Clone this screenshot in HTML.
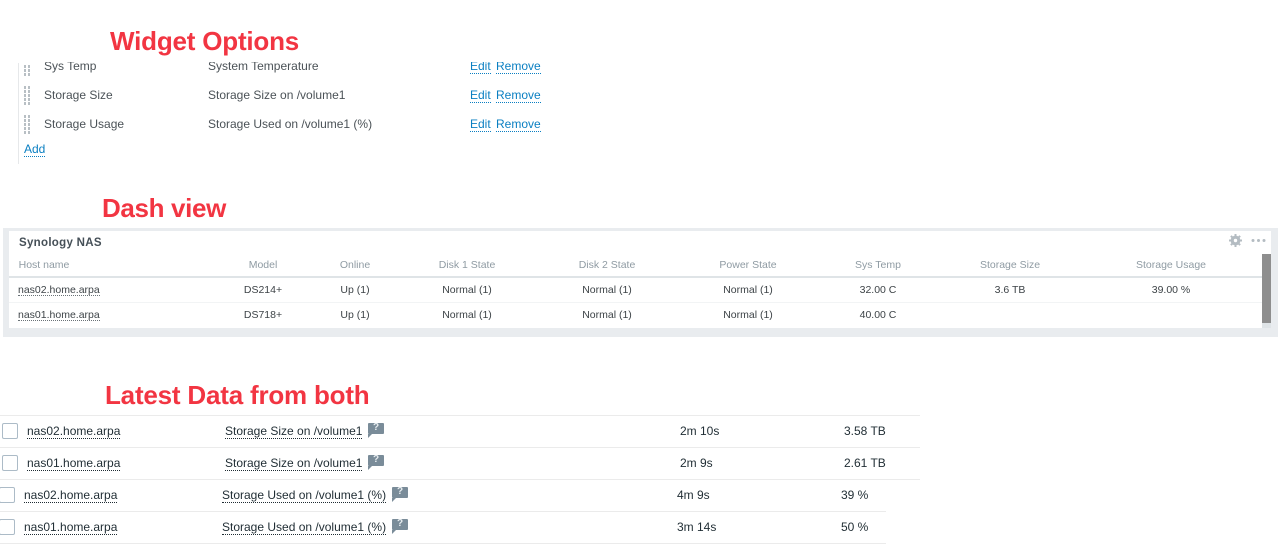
<!DOCTYPE html>
<html><head><meta charset="utf-8">
<style>
html,body{margin:0;padding:0;background:#fff;width:1278px;height:558px;overflow:hidden}
body{position:relative;font-family:"Liberation Sans",sans-serif}
div,span{position:absolute;white-space:nowrap}
.h{font-weight:bold;color:#f23542;font-size:26px;line-height:30px;font-family:"Liberation Sans",sans-serif}
.w{font-size:12px;line-height:16px;color:#4b5257;filter:blur(.3px)}
.l{font-size:12px;line-height:14px;color:#0a7fc2;border-bottom:1px dotted #0a7fc2;filter:blur(.3px)}
svg{position:absolute}
.th{font-size:10.5px;line-height:14px;color:#8f9ba3;transform:translateX(-50%);filter:blur(.35px)}
.td{font-size:10.5px;line-height:14px;color:#3d4347;transform:translateX(-50%);filter:blur(.35px)}
.ln{font-size:10.5px;line-height:12px;height:11px;color:#3d4347;left:18px;border-bottom:1px dotted #6a7277;filter:blur(.3px)}
.r{height:1px;background:#ebebeb;left:0}
.c{width:14px;height:14px;border:1px solid #acbbc7;border-radius:2px;background:#fff}
.t{font-size:12px;line-height:15px;height:14px;color:#1f2c33}
.d{border-bottom:1px dotted #1f2c33}
.q{width:16px;height:11px;background:#7a8c99;border-radius:1px;color:#e8edf0;font-size:10px;font-weight:bold;line-height:10px;text-align:center}
.q:after{content:"";position:absolute;left:0;top:11px;border-top:4px solid #7a8c99;border-right:4px solid transparent}
</style></head><body>

<div class="h" style="left:110px;top:26px;letter-spacing:-0.2px">Widget Options</div>
<div style="left:18px;top:63px;width:1px;height:101px;background:#e6e8ea"></div>

<svg style="left:24px;top:65px" width="6" height="11" fill="#b8bfc4"><rect x="0" y="0" width="2" height="3"/><rect x="4" y="0" width="2" height="3"/><rect x="0" y="4" width="2" height="3"/><rect x="4" y="4" width="2" height="3"/><rect x="0" y="8" width="2" height="3"/><rect x="4" y="8" width="2" height="3"/></svg>
<svg style="left:24px;top:86px" width="6" height="19" fill="#b8bfc4"><rect x="0" y="0" width="2" height="3"/><rect x="4" y="0" width="2" height="3"/><rect x="0" y="4" width="2" height="3"/><rect x="4" y="4" width="2" height="3"/><rect x="0" y="8" width="2" height="3"/><rect x="4" y="8" width="2" height="3"/><rect x="0" y="12" width="2" height="3"/><rect x="4" y="12" width="2" height="3"/><rect x="0" y="16" width="2" height="3"/><rect x="4" y="16" width="2" height="3"/></svg>
<svg style="left:24px;top:115px" width="6" height="19" fill="#b8bfc4"><rect x="0" y="0" width="2" height="3"/><rect x="4" y="0" width="2" height="3"/><rect x="0" y="4" width="2" height="3"/><rect x="4" y="4" width="2" height="3"/><rect x="0" y="8" width="2" height="3"/><rect x="4" y="8" width="2" height="3"/><rect x="0" y="12" width="2" height="3"/><rect x="4" y="12" width="2" height="3"/><rect x="0" y="16" width="2" height="3"/><rect x="4" y="16" width="2" height="3"/></svg>

<div style="left:30px;top:62px;width:570px;height:20px;overflow:hidden">
<div class="w" style="left:14px;top:-4px">Sys Temp</div>
<div class="w" style="left:178px;top:-4px">System Temperature</div>
<div class="l" style="left:440px;top:-3px">Edit</div>
<div class="l" style="left:466px;top:-3px">Remove</div>
</div>
<div class="w" style="left:44px;top:87px">Storage Size</div>
<div class="w" style="left:208px;top:87px">Storage Size on /volume1</div>
<div class="l" style="left:470px;top:88px">Edit</div>
<div class="l" style="left:496px;top:88px">Remove</div>
<div class="w" style="left:44px;top:116px">Storage Usage</div>
<div class="w" style="left:208px;top:116px">Storage Used on /volume1 (%)</div>
<div class="l" style="left:470px;top:117px">Edit</div>
<div class="l" style="left:496px;top:117px">Remove</div>
<div class="l" style="left:24px;top:142px">Add</div>

<div class="h" style="left:102px;top:193px;letter-spacing:-0.35px">Dash view</div>
<div style="left:3px;top:228px;width:1275px;height:109px;background:#e9ecef"></div>
<div style="left:9px;top:231px;width:1262px;height:97px;background:#fff"></div>
<div style="left:9px;top:276px;width:1253px;height:2px;background:#dfe4e7"></div>
<div style="left:9px;top:302px;width:1253px;height:1px;background:#f2f4f5"></div>
<div style="left:1262px;top:254px;width:9px;height:69px;background:#8e8e8e"></div>
<div style="left:1262px;top:323px;width:9px;height:5px;background:#dfe4e7"></div>
<div style="left:19px;top:236px;font-size:11.5px;font-weight:bold;line-height:14px;color:#454f57;letter-spacing:.3px;filter:blur(.3px)">Synology NAS</div>
<svg style="left:1229px;top:234px" width="13" height="13" viewBox="0 0 13 13"><circle cx="6.5" cy="6.5" r="3.6" fill="none" stroke="#b4bcc2" stroke-width="2.6"/><path d="M6.5 0v13M0 6.5h13M1.9 1.9l9.2 9.2M11.1 1.9l-9.2 9.2" stroke="#b4bcc2" stroke-width="2"/><circle cx="6.5" cy="6.5" r="1.7" fill="#fff"/></svg>
<svg style="left:1251px;top:238px" width="15" height="5" viewBox="0 0 15 5"><circle cx="2" cy="2.5" r="1.5" fill="#b4bcc2"/><circle cx="7.5" cy="2.5" r="1.5" fill="#b4bcc2"/><circle cx="13" cy="2.5" r="1.5" fill="#b4bcc2"/></svg>

<div class="th" style="left:44px;top:258px">Host name</div>
<div class="th" style="left:263px;top:258px">Model</div>
<div class="th" style="left:355px;top:258px">Online</div>
<div class="th" style="left:467px;top:258px">Disk 1 State</div>
<div class="th" style="left:607px;top:258px">Disk 2 State</div>
<div class="th" style="left:748px;top:258px">Power State</div>
<div class="th" style="left:878px;top:258px">Sys Temp</div>
<div class="th" style="left:1010px;top:258px">Storage Size</div>
<div class="th" style="left:1171px;top:258px">Storage Usage</div>

<div class="ln" style="top:284px">nas02.home.arpa</div>
<div class="td" style="left:263px;top:283px">DS214+</div>
<div class="td" style="left:355px;top:283px">Up (1)</div>
<div class="td" style="left:467px;top:283px">Normal (1)</div>
<div class="td" style="left:607px;top:283px">Normal (1)</div>
<div class="td" style="left:748px;top:283px">Normal (1)</div>
<div class="td" style="left:878px;top:283px">32.00 C</div>
<div class="td" style="left:1010px;top:283px">3.6 TB</div>
<div class="td" style="left:1171px;top:283px">39.00 %</div>

<div class="ln" style="top:309px">nas01.home.arpa</div>
<div class="td" style="left:263px;top:308px">DS718+</div>
<div class="td" style="left:355px;top:308px">Up (1)</div>
<div class="td" style="left:467px;top:308px">Normal (1)</div>
<div class="td" style="left:607px;top:308px">Normal (1)</div>
<div class="td" style="left:748px;top:308px">Normal (1)</div>
<div class="td" style="left:878px;top:308px">40.00 C</div>

<div class="h" style="left:105px;top:380px;letter-spacing:-0.2px">Latest Data from both</div>

<div class="r" style="top:415px;width:920px"></div>
<div class="r" style="top:447px;width:920px"></div>
<div class="r" style="top:479px;width:920px"></div>
<div class="r" style="top:511px;width:886px"></div>
<div class="r" style="top:543px;width:886px"></div>

<div class="c" style="left:2px;top:423px"></div>
<div class="t d" style="left:27px;top:424px">nas02.home.arpa</div>
<div class="t d" style="left:225px;top:424px">Storage Size on /volume1</div>
<div class="q" style="left:368px;top:423px">?</div>
<div class="t" style="left:680px;top:424px">2m 10s</div>
<div class="t" style="left:844px;top:424px">3.58 TB</div>

<div class="c" style="left:2px;top:455px"></div>
<div class="t d" style="left:27px;top:456px">nas01.home.arpa</div>
<div class="t d" style="left:225px;top:456px">Storage Size on /volume1</div>
<div class="q" style="left:368px;top:455px">?</div>
<div class="t" style="left:680px;top:456px">2m 9s</div>
<div class="t" style="left:844px;top:456px">2.61 TB</div>

<div class="c" style="left:-1px;top:487px"></div>
<div class="t d" style="left:24px;top:488px">nas02.home.arpa</div>
<div class="t d" style="left:222px;top:488px">Storage Used on /volume1 (%)</div>
<div class="q" style="left:392px;top:487px">?</div>
<div class="t" style="left:677px;top:488px">4m 9s</div>
<div class="t" style="left:841px;top:488px">39 %</div>

<div class="c" style="left:-1px;top:519px"></div>
<div class="t d" style="left:24px;top:520px">nas01.home.arpa</div>
<div class="t d" style="left:222px;top:520px">Storage Used on /volume1 (%)</div>
<div class="q" style="left:392px;top:519px">?</div>
<div class="t" style="left:677px;top:520px">3m 14s</div>
<div class="t" style="left:841px;top:520px">50 %</div>

</body></html>
